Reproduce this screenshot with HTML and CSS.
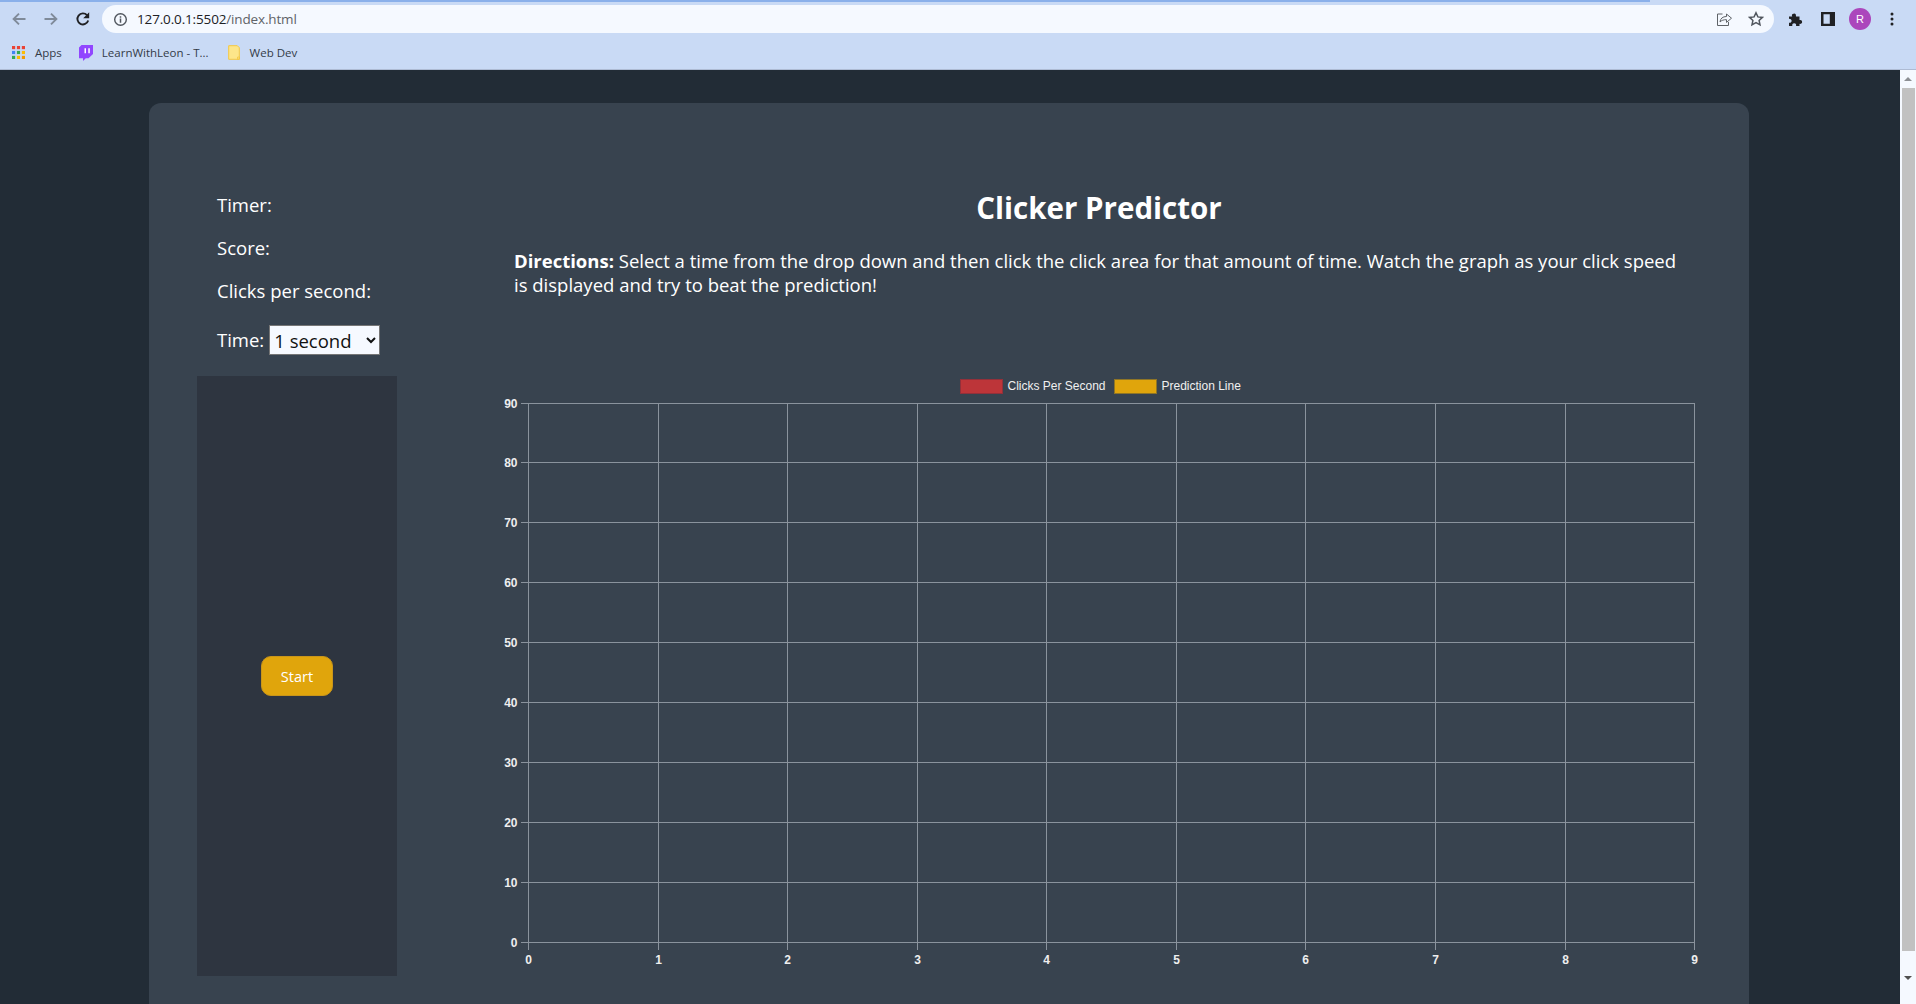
FILE: index.html
```html
<!DOCTYPE html>
<html lang="en">
<head>
<meta charset="utf-8">
<title>Clicker Predictor</title>
<link rel="stylesheet" href="styles.css">
</head>
<body>
<header class="chrome">
  <div class="load-strip"><div class="load-bar"></div></div>
  <div class="toolbar">
    <svg class="nav-icon" viewBox="0 0 16 16"><path d="M14.5 8H2.8M8 2.6 2.6 8 8 13.4" fill="none" stroke="#7f8a99" stroke-width="1.9"/></svg>
    <svg class="nav-icon" viewBox="0 0 16 16"><path d="M1.5 8h11.7M8 2.6 13.4 8 8 13.4" fill="none" stroke="#7f8a99" stroke-width="1.9"/></svg>
    <svg class="nav-icon" viewBox="0 0 16 16"><path d="M13.2 9.5A5.5 5.5 0 1 1 12 4.2" fill="none" stroke="#202124" stroke-width="1.9"/><path d="M14.2 1.2v6h-6z" fill="#202124"/></svg>
    <div class="omnibox">
      <svg class="info-icon" viewBox="0 0 16 16"><circle cx="8" cy="8" r="6.2" fill="none" stroke="#50565e" stroke-width="1.5"/><path d="M8 7v4.4M8 4.4v1.6" stroke="#50565e" stroke-width="1.6"/></svg>
      <span class="url"><span class="url-host">127.0.0.1:5502</span>/index.html</span>
      <span class="omni-spacer"></span>
      <svg class="omni-icon" viewBox="0 0 16 16"><path d="M6.5 3H1.5v11.5h11V11" fill="none" stroke="#5f6368" stroke-width="1"/><path d="M4 11c.3-3.6 2.8-5.5 6.5-5.5V3l5 4.2-5 4.2V8.7C7.800 8.600 5.500 9.300 4 11z" fill="none" stroke="#5f6368" stroke-width="1"/></svg>
      <svg class="omni-icon star" viewBox="0 0 16 16"><path d="m8 1.800 1.900 4.100 4.500.5-3.300 3 .9 4.400L8 11.600l-4 2.200.9-4.400-3.300-3 4.500-.5z" fill="none" stroke="#50565e" stroke-width="1.500"/></svg>
    </div>
    <svg class="tool-icon puzzle" viewBox="0 0 16 16"><path d="M1 5.500h3.200a2 2 0 1 1 3.800-.800v.800H11.500V9a2 2 0 1 1 0 3.800V15H8a2 2 0 1 0-3.600 0H1v-3.300a2 2 0 1 0 0-3.800z" fill="#202124"/></svg>
    <svg class="tool-icon panel-icon" viewBox="0 0 14 14"><path d="M0 0h14v14H0zM2.500 2.200v9.600h6.300V2.200z" fill="#202124" fill-rule="evenodd"/></svg>
    <div class="avatar">R</div>
    <svg class="tool-icon dots" viewBox="0 0 4 14"><circle cx="2" cy="2" r="1.500" fill="#202124"/><circle cx="2" cy="7" r="1.500" fill="#202124"/><circle cx="2" cy="12" r="1.500" fill="#202124"/></svg>
  </div>
  <nav class="bookmarks">
    <svg class="apps-icon" viewBox="0 0 14 14">
      <rect x="0" y="0" width="3.400" height="3.400" fill="#ea4335"/><rect x="5.300" y="0" width="3.400" height="3.400" fill="#ea4335"/><rect x="10.600" y="0" width="3.400" height="3.400" fill="#ea4335"/>
      <rect x="0" y="5.300" width="3.400" height="3.400" fill="#4285f4"/><rect x="5.300" y="5.300" width="3.400" height="3.400" fill="#34a853"/><rect x="10.600" y="5.300" width="3.400" height="3.400" fill="#fbbc04"/>
      <rect x="0" y="10.600" width="3.400" height="3.400" fill="#34a853"/><rect x="5.300" y="10.600" width="3.400" height="3.400" fill="#fbbc04"/><rect x="10.600" y="10.600" width="3.400" height="3.400" fill="#f29900"/>
    </svg>
    <span class="bm-label bm-apps">Apps</span>
    <svg class="twitch-icon" viewBox="0 0 14 16"><path d="M2.500 0H14v9l-4.500 4.300H6.800L4 16v-2.700H0V2.500z" fill="#9146ff"/><path d="M5.500 3.300h1.500v5H5.500zM9.300 3.300h1.500v5H9.300z" fill="#fff"/></svg>
    <span class="bm-label bm-leon">LearnWithLeon - T...</span>
    <svg class="folder-icon" viewBox="0 0 12 15"><path d="M.7.700h8.600l2 2V14.300H.7z" fill="#fde68a" stroke="#f5c842" stroke-width="1"/><path d="M9.500 12h2v2.300h-2z" fill="none" stroke="#f5c842" stroke-width=".8"/></svg>
    <span class="bm-label bm-web">Web Dev</span>
  </nav>
</header>
<div class="viewport">
  <main class="page">
    <section class="card">
      <aside class="side">
        <p class="stat">Timer:</p>
        <p class="stat">Score:</p>
        <p class="stat">Clicks per second:</p>
        <p class="stat time-row"><label for="time">Time:</label> <select id="time" class="time-select"><option>1 second</option><option>5 seconds</option><option>10 seconds</option></select></p>
        <div class="click-area"><button class="start">Start</button></div>
      </aside>
      <div class="content">
        <h1 class="title">Clicker Predictor</h1>
        <p class="directions"><strong>Directions:</strong> Select a time from the drop down and then click the click area for that amount of time. Watch the graph as your click speed is displayed and try to beat the prediction!</p>
        <svg class="chart" viewBox="0 0 1200 605" width="1200" height="605">
          <rect class="swatch-red" x="460.500" y="9.500" width="42" height="14"/>
          <text class="legend" x="507.500" y="20">Clicks Per Second</text>
          <rect class="swatch-gold" x="614.500" y="9.500" width="42" height="14"/>
          <text class="legend" x="661.500" y="20">Prediction Line</text>
          <path class="grid" d="M28.500 33V580M158.500 33V580M287.500 33V580M417.500 33V580M546.500 33V580M676.500 33V580M805.500 33V580M935.500 33V580M1065.500 33V580M1194.500 33V580"/>
          <path class="grid" d="M20.500 33.500H1195M20.500 92.500H1195M20.500 152.500H1195M20.500 212.500H1195M20.500 272.500H1195M20.500 332.500H1195M20.500 392.500H1195M20.500 452.500H1195M20.500 512.500H1195M20.500 572.500H1195"/>
          <g class="ylab">
            <text x="17.500" y="38">90</text><text x="17.500" y="97">80</text><text x="17.500" y="157">70</text><text x="17.500" y="217">60</text><text x="17.500" y="277">50</text><text x="17.500" y="337">40</text><text x="17.500" y="397">30</text><text x="17.500" y="457">20</text><text x="17.500" y="517">10</text><text x="17.500" y="577">0</text>
          </g>
          <g class="xlab">
            <text x="28.500" y="594">0</text><text x="158.500" y="594">1</text><text x="287.500" y="594">2</text><text x="417.500" y="594">3</text><text x="546.500" y="594">4</text><text x="676.500" y="594">5</text><text x="805.500" y="594">6</text><text x="935.500" y="594">7</text><text x="1065.500" y="594">8</text><text x="1194.500" y="594">9</text>
          </g>
        </svg>
      </div>
    </section>
  </main>
  <div class="scrollbar">
    <div class="sb-btn"><span class="arrow-up"></span></div>
    <div class="sb-thumb"></div>
    <div class="sb-btn sb-bottom"><span class="arrow-down"></span></div>
  </div>
</div>
</body>
</html>
```
FILE: styles.css
```css
* { box-sizing: border-box; }
html, body { height: 100%; }
body {
  margin: 0;
  display: flex;
  flex-direction: column;
  overflow: hidden;
  font-family: "Open Sans", "Noto Sans", sans-serif;
  background: #222c36;
}
.chrome {
  height: 70px;
  flex: none;
  background: #c9daf5;
  border-bottom: 1px solid #aebbd3;
}
.load-strip { height: 2px; }
.load-bar { width: 1650px; height: 2px; background: #8ab0ea; }
.toolbar {
  height: 34px;
  display: flex;
  align-items: center;
  padding-left: 11px;
}
.nav-icon { width: 16px; height: 16px; margin-right: 16px; flex: none; }
.omnibox {
  margin-left: -5px;
  width: 1672px;
  height: 28px;
  background: #f5f9ff;
  border-radius: 14px;
  display: flex;
  align-items: center;
  padding-left: 11px;
  flex: none;
}
.info-icon { width: 15px; height: 15px; flex: none; }
.url {
  margin-left: 9px;
  font: 13.500px "Open Sans", sans-serif;
  color: #5f6368;
  letter-spacing: -.15px;
}
.url-host { color: #202124; }
.omni-spacer { flex: 1; }
.omni-icon { width: 16px; height: 16px; flex: none; }
.star { margin-left: 16px; margin-right: 10px; }
.tool-icon { flex: none; }
.puzzle { width: 16px; height: 16px; margin-left: 14px; }
.panel-icon { width: 14px; height: 14px; margin-left: 17px; }
.avatar {
  width: 22px; height: 22px;
  margin-left: 14px;
  border-radius: 50%;
  background: #ab47bc;
  color: #fff;
  font: 11px/22px "Liberation Sans", sans-serif;
  text-align: center;
  flex: none;
}
.dots { width: 4px; height: 14px; margin-left: 19px; }
.bookmarks {
  height: 33px;
  display: flex;
  align-items: center;
  padding-left: 12px;
}
.apps-icon { width: 13px; height: 13px; flex: none; }
.twitch-icon { width: 14px; height: 16px; margin-left: 17px; flex: none; }
.folder-icon { width: 12px; height: 15px; margin-left: 19px; flex: none; }
.bm-label { font: 11.500px "Open Sans", sans-serif; color: #333b47; white-space: nowrap; }
.bm-apps { margin-left: 10px; }
.bm-leon { margin-left: 9px; }
.bm-web { margin-left: 10px; }
.viewport { flex: 1; min-height: 0; display: flex; }
.page {
  flex: 1;
  min-width: 0;
  overflow: hidden;
  padding: 33px 0 0 149px;
  background: #222c36;
}
.card {
  width: 1600px;
  height: 950px;
  background: #38434f;
  border-radius: 12px;
  display: flex;
  padding: 90px 0 0 48px;
  color: #fff;
}
.side { width: 200px; flex: none; }
.stat {
  margin: 0 0 19px 20px;
  font-size: 18.500px;
  line-height: 24px;
  white-space: nowrap;
}
.time-row {
  margin-top: 22px;
  margin-bottom: 21px;
  height: 30px;
  line-height: 30px;
  display: flex;
  align-items: center;
  gap: 5px;
}
.time-select {
  width: 111px;
  height: 30px;
  font: 18.500px "Open Sans", sans-serif;
  background: #f6f9ff;
  border: 1px solid #767676;
  border-radius: 0;
  color: #111;
  padding: 0;
}
.click-area {
  width: 200px;
  height: 600px;
  background: #2e3540;
  display: flex;
  justify-content: center;
  padding-top: 280px;
}
.start {
  width: 72px;
  height: 40px;
  border: 1px solid #c9951a;
  border-radius: 10px;
  background: #e0a50c;
  color: #fff;
  font: 14.500px "Open Sans", sans-serif;
}
.content { margin-left: 103px; width: 1200px; flex: none; }
.title {
  margin: -4px 16px 0 14px;
  text-align: center;
  font-size: 29.500px;
  line-height: 38px;
  font-weight: 700;
}
.directions {
  margin: 22px 16px 0 14px;
  font-size: 18.500px;
  line-height: 24px;
}
.chart { display: block; margin-top: 73px; }
.grid { stroke: #8a939d; stroke-width: 1; fill: none; shape-rendering: crispEdges; }
.legend { font: 12px "Liberation Sans", Arial, sans-serif; fill: #f0f0f0; }
.ylab text, .xlab text { font: bold 12px "Liberation Sans", Arial, sans-serif; fill: #eeeeee; }
.ylab text { text-anchor: end; }
.xlab text { text-anchor: middle; }
.swatch-red { fill: #bd3539; stroke: #92303a; stroke-width: 1; }
.swatch-gold { fill: #e0a50c; stroke: #8f7526; stroke-width: 1; }
.scrollbar {
  width: 16px;
  flex: none;
  background: #f5f9ff;
  display: flex;
  flex-direction: column;
}
.sb-btn { height: 18px; display: flex; align-items: center; justify-content: center; flex: none; }
.sb-thumb { width: 13px; height: 863px; margin-left: 2px; background: #c1c1c1; flex: none; }
.sb-bottom { flex: 1; }
.arrow-up { border: 4px solid transparent; border-top: 0; border-bottom: 4px solid #8c8f94; width: 0; height: 0; }
.arrow-down { border: 4px solid transparent; border-bottom: 0; border-top: 4px solid #505050; width: 0; height: 0; }
```
